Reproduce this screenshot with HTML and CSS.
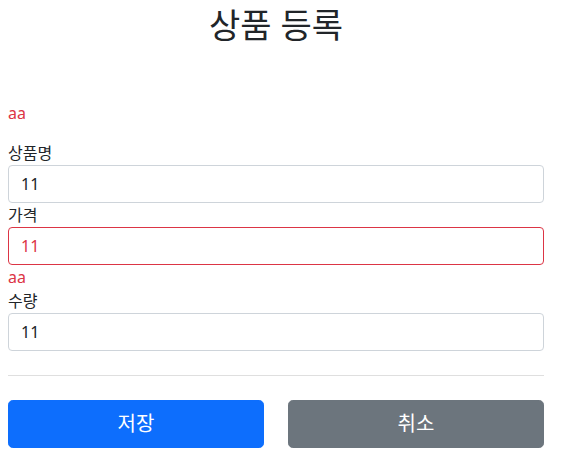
FILE: index.html
```html
<!DOCTYPE html>
<html lang="ko">
<head>
    <meta charset="UTF-8">
    <meta name="viewport" content="width=device-width, initial-scale=1.0">
    <title>상품 등록</title>
    <link rel="stylesheet" href="styles.css">
</head>
<body>

    <div class="container">
        <!-- Header -->
        <div class="page-header">
            <h2>상품 등록</h2>
        </div>

        <form action="#" method="post">
            <!-- Global error -->
            <p class="field-error">aa</p>

            <div>
                <label for="itemName">상품명</label>
                <input type="text" id="itemName" class="form-control" value="11">
            </div>
            <div>
                <label for="price">가격</label>
                <input type="text" id="price" class="form-control field-error" value="11">
                <div class="field-error">aa</div>
            </div>
            <div>
                <label for="quantity">수량</label>
                <input type="text" id="quantity" class="form-control" value="11">
            </div>

            <hr>

            <div class="btn-row">
                <button type="submit" class="btn btn-primary">저장</button>
                <button type="button" class="btn btn-secondary">취소</button>
            </div>
        </form>
    </div>

</body>
</html>
```

FILE: styles.css
```css
body {
    margin: 0;
    padding: 0 8px;
    font-family: "Noto Sans", "Noto Sans CJK KR", sans-serif;
    font-size: 16px;
    line-height: 1.5;
    color: #212529;
    background-color: #fff;
}

.container {
    max-width: 536px;
}

/* Header */
.page-header {
    padding-top: 4.6px;
    padding-bottom: 48px;
    text-align: center;
}

.page-header h2 {
    margin: 0 0 8px;
    font-size: 34px;
    font-weight: 400;
    line-height: 1.2;
}

label {
    display: inline-block;
}

p {
    margin: 0 0 16px;
}

.form-control {
    display: block;
    width: 100%;
    box-sizing: border-box;
    padding: 6px 12px;
    font-family: inherit;
    font-size: 16px;
    line-height: 1.5;
    color: #212529;
    background-color: #fff;
    border: 1px solid #ced4da;
    border-radius: 4px;
    outline: none;
}

/* Validation */
.field-error {
    color: #dc3545;
    border-color: #dc3545;
}

hr {
    margin: 24px 0;
    height: 1px;
    border: 0;
    background-color: currentColor;
    opacity: 0.25;
}

/* Buttons */
.btn-row {
    display: grid;
    grid-template-columns: 1fr 1fr;
    gap: 24px;
}

.btn {
    width: 100%;
    padding: 8px 16px;
    font-family: inherit;
    font-size: 20px;
    line-height: 1.5;
    color: #fff;
    border: 1px solid transparent;
    border-radius: 4.8px;
    cursor: pointer;
}

.btn-primary {
    background-color: #0d6efd;
    border-color: #0d6efd;
}

.btn-secondary {
    background-color: #6c757d;
    border-color: #6c757d;
}
```
